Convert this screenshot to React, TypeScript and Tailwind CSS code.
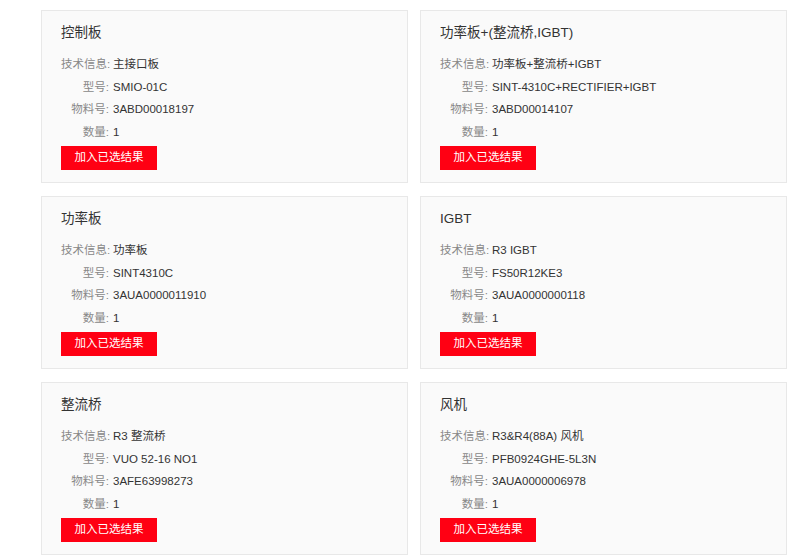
const parts = [
  { name: "控制板", info: "主接口板", model: "SMIO-01C", code: "3ABD00018197", qty: "1" },
  { name: "功率板+(整流桥,IGBT)", info: "功率板+整流桥+IGBT", model: "SINT-4310C+RECTIFIER+IGBT", code: "3ABD00014107", qty: "1" },
  { name: "功率板", info: "功率板", model: "SINT4310C", code: "3AUA0000011910", qty: "1" },
  { name: "IGBT", info: "R3 IGBT", model: "FS50R12KE3", code: "3AUA0000000118", qty: "1" },
  { name: "整流桥", info: "R3 整流桥", model: "VUO 52-16 NO1", code: "3AFE63998273", qty: "1" },
  { name: "风机", info: "R3&R4(88A) 风机", model: "PFB0924GHE-5L3N", code: "3AUA0000006978", qty: "1" },
]

function Row({ label, value }: { label: string; value: string }) {
  return (
    <div className="flex whitespace-nowrap leading-[22.5px] text-[11.5px]">
      <span className="w-[48px] shrink-0 text-right text-[#888]">{label}:</span>
      <span className="ml-[4px] text-[#333]">{value}</span>
    </div>
  )
}

export default function App() {
  return (
    <div
      className="w-[800px] h-[555px] overflow-hidden bg-white"
      style={{ fontFamily: '"Liberation Sans", Arial, "Noto Sans CJK SC", sans-serif' }}
    >
      <div className="grid grid-cols-[367px_367px] gap-x-[12px] gap-y-[13px] pl-[41px] pt-[10px]">
        {parts.map((p) => (
          <div key={p.code} className="h-[173px] border border-[#e8e8e8] bg-[#fafafa] px-[19px] pt-[12px]">
            <h3 className="whitespace-nowrap text-[13.5px] leading-[20px] text-[#333]">{p.name}</h3>
            <div className="mt-[10px]">
              <Row label="技术信息" value={p.info} />
              <Row label="型号" value={p.model} />
              <Row label="物料号" value={p.code} />
              <Row label="数量" value={p.qty} />
            </div>
            <button className="mt-[3px] h-[24px] w-[96px] bg-[#ff0013] text-[11.5px] text-white">
              加入已选结果
            </button>
          </div>
        ))}
      </div>
    </div>
  )
}
